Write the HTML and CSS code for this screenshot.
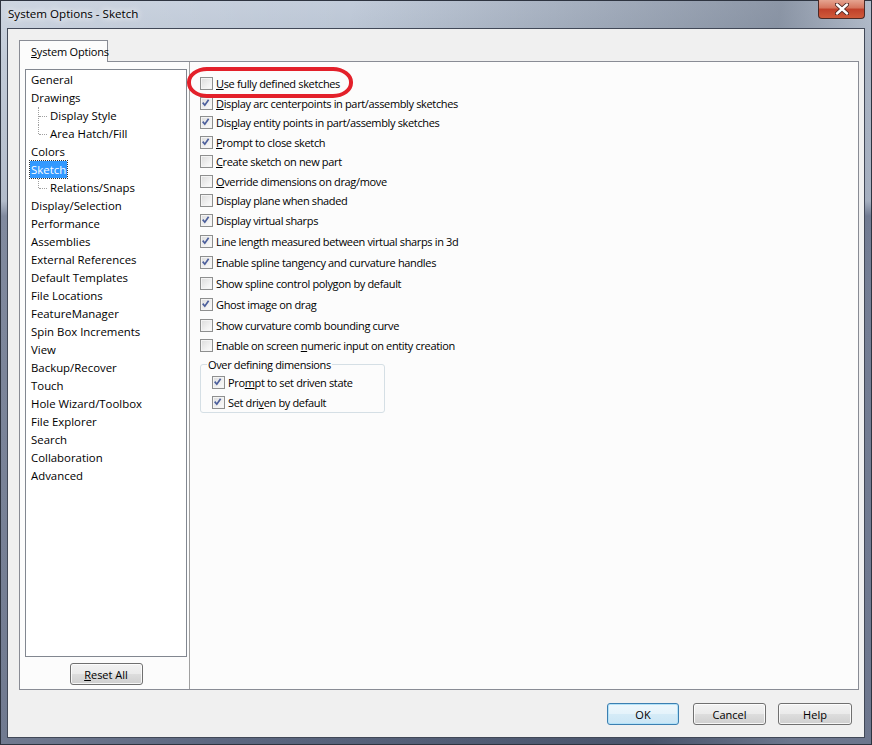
FILE: index.html
```html
<!DOCTYPE html>
<html>
<head>
  <title>System Options - Sketch</title>
  <link rel="stylesheet" href="styles.css">
</head>
<body>
  <div class="window">
    <div class="titlebar">
      <span class="title">System Options - Sketch</span>
      <div class="close">
        <svg width="14" height="12" viewBox="0 0 14 12">
          <path d="M2 1.5 L12 10.5 M12 1.5 L2 10.5" stroke="#4a2420" stroke-width="4.2" stroke-linecap="round"/>
          <path d="M2 1.5 L12 10.5 M12 1.5 L2 10.5" stroke="#ffffff" stroke-width="2.4" stroke-linecap="round"/>
        </svg>
      </div>
    </div>

    <div class="client">
      <div class="tabs">
        <div class="tab"><u>S</u>ystem Options</div>
      </div>

      <div class="panel">
        <div class="side">
          <ul class="tree">
            <li>General</li>
            <li>Drawings</li>
            <li class="child">Display Style</li>
            <li class="child last">Area Hatch/Fill</li>
            <li>Colors</li>
            <li><span class="selected">Sketch</span></li>
            <li class="child last">Relations/Snaps</li>
            <li>Display/Selection</li>
            <li>Performance</li>
            <li>Assemblies</li>
            <li>External References</li>
            <li>Default Templates</li>
            <li>File Locations</li>
            <li>FeatureManager</li>
            <li>Spin Box Increments</li>
            <li>View</li>
            <li>Backup/Recover</li>
            <li>Touch</li>
            <li>Hole Wizard/Toolbox</li>
            <li>File Explorer</li>
            <li>Search</li>
            <li>Collaboration</li>
            <li>Advanced</li>
          </ul>
          <button class="button reset"><u>R</u>eset All</button>
        </div>

        <div class="options">
          <div class="rows-a">
            <div class="check highlight"><span class="box"></span><span><u>U</u>se fully defined sketches</span></div>
            <div class="check"><span class="box on"><svg viewBox="0 0 13 13"><path d="M3 6.5 L5.5 9.5 L10 3" /></svg></span><span><u>D</u>isplay arc centerpoints in part/assembly sketches</span></div>
            <div class="check"><span class="box on"><svg viewBox="0 0 13 13"><path d="M3 6.5 L5.5 9.5 L10 3" /></svg></span><span>Dis<u>p</u>lay entity points in part/assembly sketches</span></div>
            <div class="check"><span class="box on"><svg viewBox="0 0 13 13"><path d="M3 6.5 L5.5 9.5 L10 3" /></svg></span><span><u>P</u>rompt to close sketch</span></div>
            <div class="check"><span class="box"></span><span><u>C</u>reate sketch on new part</span></div>
            <div class="check"><span class="box"></span><span><u>O</u>verride dimensions on drag/move</span></div>
            <div class="check"><span class="box"></span><span>Display plane when shaded</span></div>
            <div class="check"><span class="box on"><svg viewBox="0 0 13 13"><path d="M3 6.5 L5.5 9.5 L10 3" /></svg></span><span>Display virtual sharps</span></div>
          </div>
          <div class="rows-b">
            <div class="check"><span class="box on"><svg viewBox="0 0 13 13"><path d="M3 6.5 L5.5 9.5 L10 3" /></svg></span><span>Line length measured between virtual sharps in 3d</span></div>
            <div class="check"><span class="box on"><svg viewBox="0 0 13 13"><path d="M3 6.5 L5.5 9.5 L10 3" /></svg></span><span>Enable spline tangency and curvature handles</span></div>
            <div class="check"><span class="box"></span><span>Show spline control polygon by default</span></div>
            <div class="check"><span class="box on"><svg viewBox="0 0 13 13"><path d="M3 6.5 L5.5 9.5 L10 3" /></svg></span><span>Ghost image on drag</span></div>
            <div class="check"><span class="box"></span><span>Show curvature comb bounding curve</span></div>
            <div class="check"><span class="box"></span><span>Enable on screen <u>n</u>umeric input on entity creation</span></div>
          </div>

          <fieldset class="group">
            <legend>Over defining dimensions</legend>
            <div class="check"><span class="box on"><svg viewBox="0 0 13 13"><path d="M3 6.5 L5.5 9.5 L10 3" /></svg></span><span>Pro<u>m</u>pt to set driven state</span></div>
            <div class="check"><span class="box on"><svg viewBox="0 0 13 13"><path d="M3 6.5 L5.5 9.5 L10 3" /></svg></span><span>Set dri<u>v</u>en by default</span></div>
          </fieldset>
        </div>
      </div>

      <div class="footer">
        <button class="button default">OK</button>
        <button class="button">Cancel</button>
        <button class="button help">Help</button>
      </div>
    </div>
  </div>
</body>
</html>
```

FILE: styles.css
```css
/* Windows 7 style dialog */
body {
  margin: 0;
  font-family: "Open Sans", "Noto Sans", sans-serif;
  font-size: 11px;
  color: #000;
}

.window {
  width: 872px;
  height: 745px;
  box-sizing: border-box;
  border: 1px solid #2e3440;
  display: flex;
  flex-direction: column;
  background:
    linear-gradient(100deg, rgba(255, 255, 255, 0.2) 0%, rgba(255, 255, 255, 0) 35%, rgba(40, 50, 70, 0.35) 78%, rgba(255, 255, 255, 0.1) 92%),
    linear-gradient(to bottom, #c2ccda 0, #b3bece 60px, #a2adbf 200px, #66718a 215px, #5c6780 745px);
}

.titlebar {
  height: 27px;
  display: flex;
  align-items: flex-start;
  justify-content: space-between;
}

.title {
  margin: 5px 0 0 7px;
  font-size: 11.6px;
  color: #000;
  text-shadow: 0 0 6px #fff, 0 0 10px #fff;
}

.close {
  width: 45px;
  height: 18px;
  margin: -1px 6px 0 0;
  border: 1px solid #4c2a26;
  border-top: none;
  border-radius: 0 0 4px 4px;
  background: linear-gradient(to bottom, #e5a491 0, #d5735c 45%, #c0402a 50%, #cf5a3a 100%);
  display: flex;
  align-items: center;
  justify-content: center;
}

.client {
  flex: 1;
  margin: 0 6px 6px 6px;
  border: 1px solid #414857;
  background: #f0f0f0;
  padding: 11px 5px 0 11px;
  display: flex;
  flex-direction: column;
}

.tabs {
  display: flex;
  position: relative;
  z-index: 1;
}

.tab {
  height: 22px;
  width: 89px;
  box-sizing: border-box;
  border: 1px solid #898c95;
  border-bottom: none;
  background: #fcfcfc;
  padding: 3px 0 0 11px;
  margin-bottom: -1px;
  white-space: nowrap;
  letter-spacing: -0.2px;
}

.panel {
  height: 629px;
  box-sizing: border-box;
  border: 1px solid #898c95;
  background: #fcfcfc;
  display: flex;
}

.side {
  width: 162px;
  margin-left: 5px;
  padding-top: 7px;
  display: flex;
  flex-direction: column;
  align-items: center;
}

.tree {
  list-style: none;
  margin: 0;
  width: 162px;
  height: 588px;
  box-sizing: border-box;
  border: 1px solid #828790;
  background: #fff;
  padding: 1px 0 0 5px;
  font-size: 11.4px;
}

.tree li {
  height: 18px;
  line-height: 18px;
  position: relative;
  white-space: nowrap;
}

.tree li.child {
  padding-left: 19px;
}

.tree li.child::before {
  content: "";
  position: absolute;
  left: 7px;
  top: 0;
  height: 18px;
  border-left: 1px dotted #a0a0a0;
}

.tree li.child.last::before {
  height: 9px;
}

.tree li.child::after {
  content: "";
  position: absolute;
  left: 8px;
  top: 9px;
  width: 8px;
  border-top: 1px dotted #a0a0a0;
}

.selected {
  background: #3399ff;
  color: #fff;
  outline: 1px dotted #333;
  padding: 1px 1px;
  margin-left: -1px;
}

.button {
  font-family: inherit;
  font-size: 11px;
  height: 22px;
  width: 73px;
  padding: 0;
  border: 1px solid #707070;
  border-radius: 3px;
  background: linear-gradient(to bottom, #f2f2f2 0, #ebebeb 48%, #dddddd 52%, #cfcfcf 100%);
  box-shadow: inset 0 0 0 1px rgba(255, 255, 255, 0.8);
  color: #000;
}

.reset {
  margin-top: 6px;
}

.button.default {
  width: 72px;
  border-color: #3c7fb1;
  box-shadow: inset 0 0 0 1px #b3e2f8;
  background: linear-gradient(to bottom, #eef7fc 0, #e5f3fb 48%, #d5ebf7 52%, #cbe6f5 100%);
}

.options {
  flex: 1;
  margin: 0 0 0 2px;
  border-left: 1px solid #a0a0a0;
  padding: 12px 0 0 10px;
  letter-spacing: -0.35px;
}

.check {
  display: flex;
  align-items: center;
  white-space: nowrap;
}

.rows-a .check {
  height: 19.5px;
}

.rows-b {
  margin-top: 1px;
}

.rows-b .check {
  height: 20.9px;
}

.box {
  width: 11px;
  height: 11px;
  border: 1px solid #8e8f8f;
  background: linear-gradient(135deg, #dcdcdc 0, #f4f4f4 70%, #fbfbfb 100%);
  box-shadow: inset 0 0 0 1px #f4f4f4;
  margin-right: 3px;
  flex: none;
  display: flex;
}

.box svg {
  width: 11px;
  height: 11px;
  overflow: visible;
}

.box svg path {
  fill: none;
  stroke: #4c5f9c;
  stroke-width: 2;
  transform: translate(-1px, -1px);
}

/* hand-drawn red mark round the first option */
.highlight {
  position: relative;
}

.highlight::after {
  content: "";
  position: absolute;
  left: -13px;
  top: -7px;
  width: 158px;
  height: 23px;
  border: 4px solid #e3202a;
  border-radius: 20px / 15px;
}

.group {
  margin: 1px 0 0 0;
  width: 185px;
  box-sizing: border-box;
  border: 1px solid #d5dfe5;
  border-radius: 3px;
  padding: 0 0 0 11px;
}

.group legend {
  padding: 0 1px;
  margin-left: -5px;
}

.group .check {
  height: 20px;
}

.footer {
  display: flex;
  justify-content: flex-end;
  padding: 13px 7px 0 0;
}

.footer .button {
  margin-left: 14px;
}

.footer .help {
  width: 74px;
  margin-left: 12px;
}
```
